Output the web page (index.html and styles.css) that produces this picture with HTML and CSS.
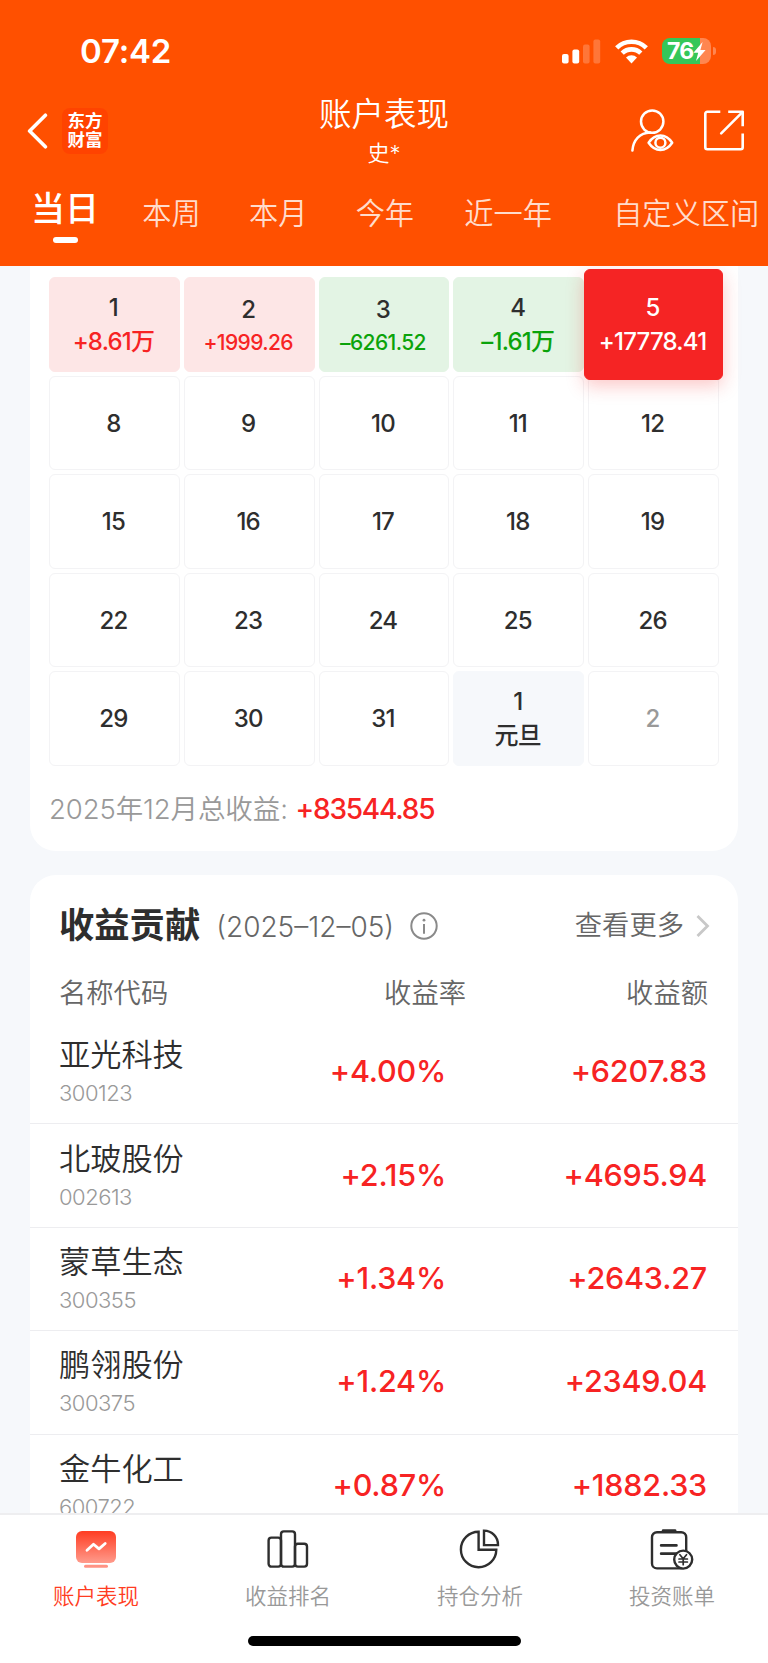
FILE: index.html
```
<!DOCTYPE html>
<html lang="zh-CN">
<head>
    <meta charset="UTF-8">
    <title>账户表现</title>
    <link rel="stylesheet" href="styles.css">
</head>
<body>
    <header class="header">
        <div class="status-bar">
            <span class="status-time">07:42</span>
            <div class="status-icons">
                <svg class="signal" width="39" height="25" viewBox="0 0 39 25" fill="#fff">
                    <rect x="0" y="15" width="6.6" height="9.6" rx="2"/>
                    <rect x="10.4" y="10.6" width="6.8" height="14" rx="2"/>
                    <rect x="21" y="5.4" width="6.6" height="19.2" rx="2" opacity=".22"/>
                    <rect x="31.4" y="0.4" width="6.8" height="24.2" rx="2" opacity=".22"/>
                </svg>
                <svg class="wifi" width="33" height="25" viewBox="0 0 33 25" fill="none" stroke="#fff" stroke-width="4.6">
                    <path d="M1.7 8.8a21 21 0 0 1 29.6 0"/>
                    <path d="M7.2 14.2a13.3 13.3 0 0 1 18.6 0"/>
                    <path d="M11 18.6a7.8 7.8 0 0 1 11 0L16.5 24.4z" fill="#fff" stroke="none"/>
                </svg>
                <div class="battery">
                    <span class="battery-level">76</span>
                    <svg class="battery-bolt" width="13" height="19" viewBox="0 0 13 19" fill="#fff"><path d="M9.6 0L.4 10.8h4.8L3 19l9.6-11H7.4z"/></svg>
                </div>
                <span class="battery-cap"></span>
            </div>
        </div>

        <div class="nav-bar">
            <div class="nav-left">
                <svg class="back-icon" width="22" height="36" viewBox="0 0 22 36" fill="none" stroke="#fff" stroke-width="3.6" stroke-linecap="round" stroke-linejoin="round"><path d="M19.4 2.2L3.6 18l15.8 15.8"/></svg>
                <div class="app-logo">东方<br>财富</div>
            </div>
            <div class="nav-title">
                <h1 class="title">账户表现</h1>
                <p class="subtitle">史*</p>
            </div>
            <div class="nav-right">
                <svg width="44" height="44" viewBox="0 0 44 44" fill="none" stroke="#fff" stroke-width="2.5" stroke-linecap="round">
                    <circle cx="22.2" cy="12.6" r="11.2"/>
                    <path d="M2.4 41.6C3.2 31 10 23.800 20 23.5"/>
                    <path d="M18.6 33.7c6.5-9.6 17.2-9.6 23.6 0-6.4 9.6-17.1 9.6-23.6 0z" stroke-linejoin="round"/>
                    <circle cx="30.4" cy="33.7" r="5"/>
                </svg>
                <svg width="42" height="42" viewBox="0 0 42 42" fill="none" stroke="#fff" stroke-width="2.6" stroke-linejoin="round">
                    <path d="M17.3 1.8H4.3a2 2 0 0 0-2 2v33.4a2 2 0 0 0 2 2h33.4a2 2 0 0 0 2-2V23.5"/>
                    <path d="M25.2 1.8h14.5v14.5"/>
                    <path d="M39.2 2.3L18.2 23.3" stroke-linecap="round"/>
                </svg>
            </div>
        </div>

        <nav class="period-tabs">
            <span class="period active">当日</span>
            <span class="period">本周</span>
            <span class="period">本月</span>
            <span class="period">今年</span>
            <span class="period period-year">近一年</span>
            <span class="period period-custom">自定义区间</span>
        </nav>
    </header>

    <main class="content">
        <section class="card calendar-card">
            <div class="calendar">
                <div class="day up"><span>1</span><span class="profit">+8.61万</span></div>
                <div class="day up small"><span>2</span><span class="profit">+1999.26</span></div>
                <div class="day down small"><span>3</span><span class="profit">–6261.52</span></div>
                <div class="day down"><span>4</span><span class="profit">–1.61万</span></div>
                <div class="day selected"><span>5</span><span class="profit">+17778.41</span></div>
                <div class="day">8</div>
                <div class="day">9</div>
                <div class="day">10</div>
                <div class="day">11</div>
                <div class="day">12</div>
                <div class="day">15</div>
                <div class="day">16</div>
                <div class="day">17</div>
                <div class="day">18</div>
                <div class="day">19</div>
                <div class="day">22</div>
                <div class="day">23</div>
                <div class="day">24</div>
                <div class="day">25</div>
                <div class="day">26</div>
                <div class="day">29</div>
                <div class="day">30</div>
                <div class="day">31</div>
                <div class="day holiday"><span>1</span><span class="profit">元旦</span></div>
                <div class="day muted">2</div>
            </div>
            <p class="month-total">2025年12月总收益: <span class="total-value">+83544.85</span></p>
        </section>

        <section class="card contribution-card">
            <div class="card-head">
                <h2 class="card-title">收益贡献</h2>
                <span class="card-date">(2025–12–05)</span>
                <svg class="info-icon" width="28" height="28" viewBox="0 0 28 28" fill="none" stroke="#8a8a8a" stroke-width="2">
                    <circle cx="14" cy="14" r="12.7"/>
                    <path d="M14 12v9.8"/>
                    <circle cx="14" cy="8.2" r="1.4" fill="#8a8a8a" stroke="none"/>
                </svg>
                <a class="more">查看更多
                    <svg width="14" height="24" viewBox="0 0 14 24" fill="none" stroke="#c8c8c8" stroke-width="2.8"><path d="M1.5 2l10 10-10 10"/></svg>
                </a>
            </div>
            <div class="list-head">
                <span>名称代码</span>
                <span class="col-rate">收益率</span>
                <span class="col-amount">收益额</span>
            </div>
            <div class="stock">
                <div class="stock-info"><p class="stock-name">亚光科技</p><p class="stock-code">300123</p></div>
                <span class="stock-rate">+4.00%</span>
                <span class="stock-amount">+6207.83</span>
            </div>
            <div class="stock">
                <div class="stock-info"><p class="stock-name">北玻股份</p><p class="stock-code">002613</p></div>
                <span class="stock-rate">+2.15%</span>
                <span class="stock-amount">+4695.94</span>
            </div>
            <div class="stock">
                <div class="stock-info"><p class="stock-name">蒙草生态</p><p class="stock-code">300355</p></div>
                <span class="stock-rate">+1.34%</span>
                <span class="stock-amount">+2643.27</span>
            </div>
            <div class="stock">
                <div class="stock-info"><p class="stock-name">鹏翎股份</p><p class="stock-code">300375</p></div>
                <span class="stock-rate">+1.24%</span>
                <span class="stock-amount">+2349.04</span>
            </div>
            <div class="stock">
                <div class="stock-info"><p class="stock-name">金牛化工</p><p class="stock-code">600722</p></div>
                <span class="stock-rate">+0.87%</span>
                <span class="stock-amount">+1882.33</span>
            </div>
        </section>
    </main>

    <footer class="tab-bar">
        <div class="tabs">
            <div class="tab active">
                <svg width="44" height="44" viewBox="0 0 44 44">
                    <defs>
                        <linearGradient id="screen" x1="0" y1="0" x2="0" y2="1">
                            <stop offset="0" stop-color="#ff3c22"/>
                            <stop offset="1" stop-color="#ff9b8c"/>
                        </linearGradient>
                    </defs>
                    <rect x="2" y="3" width="40" height="32" rx="6" fill="url(#screen)"/>
                    <rect x="10" y="36.8" width="24" height="3" rx="1.5" fill="#ff9384"/>
                    <path d="M13 22.3l6.5-6 5.5 4.6 6.2-5.4" fill="none" stroke="#fff" stroke-width="2.8" stroke-linecap="round" stroke-linejoin="round"/>
                </svg>
                <span>账户表现</span>
            </div>
            <div class="tab">
                <svg width="44" height="44" viewBox="0 0 44 44" fill="none" stroke="#2e2e2e" stroke-width="2.4">
                    <rect x="2.6" y="9.6" width="12.4" height="29" rx="2.8"/>
                    <rect x="15" y="3.4" width="14" height="35.2" rx="2.8"/>
                    <rect x="29" y="15.8" width="12" height="22.8" rx="2.8"/>
                </svg>
                <span>收益排名</span>
            </div>
            <div class="tab">
                <svg width="44" height="44" viewBox="0 0 44 44" fill="none" stroke="#2e2e2e" stroke-width="2.4">
                    <path d="M20.600 3.800A17.700 17.700 0 1 0 38.300 21.700H20.600z"/>
                    <path d="M26 2.600a14 14 0 0 1 14 14.500H26z"/>
                </svg>
                <span>持仓分析</span>
            </div>
            <div class="tab">
                <svg width="44" height="44" viewBox="0 0 44 44" fill="none" stroke="#2e2e2e" stroke-width="2.4" stroke-linecap="round" stroke-linejoin="round">
                    <rect x="2" y="4.2" width="34.2" height="36.2" rx="5"/>
                    <path d="M13.2 2.6h11.800" stroke-width="2.8"/>
                    <path d="M11.200 17.400h15.200M11.200 25.700h15" stroke-width="2.8"/>
                    <circle cx="33.200" cy="31.600" r="9" fill="#fff"/>
                    <path d="M29.900 26.700l3.300 4 3.300-4M33.200 30.700v6M29 31h8.400M29 34h8.400" stroke-width="1.700"/>
                </svg>
                <span>投资账单</span>
            </div>
        </div>
        <div class="home-indicator"></div>
    </footer>
</body>
</html>
```

FILE: styles.css
```
:root {
    --brand-color: #ff5000;
    --up-color: #f72323;
    --down-color: #0ba30b;
    --page-background: #f6f8fb;
    --text-color: #2e2e2e;
    --text-secondary: #666666;
    --text-muted: #999999;
    --card-background: #ffffff;
}

* {
    margin: 0;
    padding: 0;
    box-sizing: border-box;
}

body {
    width: 768px;
    height: 1663px;
    display: flex;
    flex-direction: column;
    overflow: hidden;
    font-family: Inter, "Noto Sans CJK SC", sans-serif;
    font-weight: 350;
    background-color: var(--page-background);
    color: var(--text-color);
}

svg {
    display: block;
    flex-shrink: 0;
}

/* Header */
.header {
    flex: none;
    height: 266px;
    background-color: var(--brand-color);
    color: #fff;
}

.status-bar {
    display: flex;
    justify-content: space-between;
    height: 96px;
    padding: 31px 52px 0 80px;
}

.status-time {
    font-size: 33px;
    font-weight: 600;
    letter-spacing: -0.2px;
    line-height: 40px;
}

.status-icons {
    display: flex;
    align-items: center;
    height: 40px;
}

.wifi {
    margin: 0 14px;
}

.battery {
    display: flex;
    align-items: center;
    width: 49px;
    height: 26px;
    padding-left: 5px;
    border-radius: 8px;
    background: linear-gradient(90deg, #34c759 77%, #ff8650 77%);
}

.battery-level {
    font-size: 23px;
    font-weight: 700;
    letter-spacing: -0.8px;
    line-height: 26px;
}

.battery-cap {
    width: 3px;
    height: 8px;
    margin-left: 2px;
    border-radius: 0 3px 3px 0;
    background-color: #ff8650;
}

.nav-bar {
    display: grid;
    grid-template-columns: 1fr 160px 1fr;
    height: 80px;
}

.nav-left {
    display: flex;
    align-items: center;
    height: 69px;
    padding-left: 26px;
}

.app-logo {
    width: 46px;
    height: 46px;
    margin-left: 14px;
    padding-top: 3px;
    border-radius: 8px;
    background-color: #ff4300;
    font-size: 17.5px;
    font-weight: 700;
    line-height: 19px;
    text-align: center;
}

.nav-title {
    text-align: center;
}

.title {
    font-size: 32.5px;
    font-weight: 350;
    line-height: 38px;
    white-space: nowrap;
}

.subtitle {
    font-size: 22px;
    line-height: 38px;
}

.nav-right {
    display: flex;
    justify-content: flex-end;
    align-items: center;
    gap: 29px;
    height: 69px;
    padding-right: 23px;
}

.period-tabs {
    display: flex;
    gap: 48.3px;
    height: 90px;
    padding: 12px 0 0 31px;
    white-space: nowrap;
}

.period {
    font-size: 29.2px;
    line-height: 52px;
    color: #ffdccc;
}

.period.active {
    display: flex;
    flex-direction: column;
    align-items: center;
    margin-right: -5px;
    font-size: 34px;
    font-weight: 500;
    line-height: 42px;
    color: #fff;
}

.period.active::after {
    content: "";
    width: 25px;
    height: 6px;
    margin-top: 7px;
    border-radius: 3px;
    background-color: #fff;
}

.period-year {
    margin-left: 2px;
}

.period-custom {
    margin-left: 13px;
}

/* Scrolling content */
.content {
    flex: 1;
    min-height: 0;
    overflow: hidden;
    padding: 0 30px;
}

.card {
    background-color: var(--card-background);
}

.calendar-card {
    height: 585px;
    padding: 11px 19px 0;
    border-radius: 0 0 26px 26px;
}

.calendar {
    display: grid;
    grid-template-columns: repeat(5, 1fr);
    grid-auto-rows: 94.5px;
    gap: 4px;
}

.day {
    display: flex;
    flex-direction: column;
    align-items: center;
    justify-content: center;
    padding: 2px 2px 0 0;
    border: 1px solid #f3f3f5;
    border-radius: 6px;
    font-size: 24px;
    font-weight: 500;
    letter-spacing: -0.8px;
    line-height: 34px;
}

.up {
    border-color: #fde6e6;
    background-color: #fde6e6;
}

.down {
    border-color: #e3f4e4;
    background-color: #e3f4e4;
}

.up .profit {
    color: var(--up-color);
}

.down .profit {
    color: var(--down-color);
}

.small .profit {
    font-size: 21px;
    line-height: 31px;
    letter-spacing: -0.6px;
}

.selected {
    z-index: 1;
    margin: -8px -4px;
    border-color: #f52424;
    background-color: #f52424;
    color: #fff;
    box-shadow: 0 6px 18px rgba(245, 36, 36, 0.25);
}

.holiday {
    border-color: var(--page-background);
    background-color: var(--page-background);
}

.muted {
    color: var(--text-muted);
}

.month-total {
    margin-top: 21px;
    font-size: 27.5px;
    letter-spacing: -0.1px;
    line-height: 44px;
    color: var(--text-muted);
}

.total-value {
    font-size: 28px;
    font-weight: 500;
    letter-spacing: -1.2px;
    color: var(--up-color);
}

.contribution-card {
    margin-top: 24px;
    padding-top: 26px;
    border-radius: 26px 26px 0 0;
}

.card-head {
    display: flex;
    align-items: center;
    height: 50px;
    padding: 0 28px 0 29px;
}

.card-title {
    font-size: 35.3px;
    font-weight: 700;
    line-height: 50px;
}

.card-date {
    margin-left: 16px;
    padding-top: 1px;
    font-size: 28px;
    color: var(--text-secondary);
}

.info-icon {
    margin-left: 16px;
}

.more {
    display: flex;
    align-items: center;
    gap: 12px;
    margin-left: auto;
    font-size: 27.3px;
    line-height: 38px;
    color: var(--text-secondary);
}

.list-head {
    display: grid;
    grid-template-columns: 1fr 240px 242px;
    height: 70px;
    padding: 22px 30px 0 29px;
    font-size: 27.3px;
    line-height: 42px;
    color: var(--text-secondary);
}

.col-rate,
.col-amount {
    text-align: right;
}

.stock {
    display: grid;
    grid-template-columns: 1fr 220px 261px;
    align-items: center;
    height: 103.4px;
    padding: 0 31px 0 29px;
    border-bottom: 1px solid #ededf0;
}

.stock-name {
    font-size: 31.2px;
    line-height: 40px;
}

.stock-code {
    padding-top: 2px;
    font-size: 22px;
    letter-spacing: -0.5px;
    line-height: 32px;
    color: var(--text-muted);
}

.stock-rate,
.stock-amount {
    padding-bottom: 3px;
    font-size: 30.5px;
    font-weight: 500;
    letter-spacing: -0.2px;
    text-align: right;
    color: var(--up-color);
}

/* Bottom tab bar */
.tab-bar {
    flex: none;
    height: 150px;
    border-top: 2px solid #eeeef0;
    background-color: #fff;
}

.tabs {
    display: grid;
    grid-template-columns: repeat(4, 1fr);
    height: 121px;
    padding-top: 13px;
}

.tab {
    display: flex;
    flex-direction: column;
    align-items: center;
    font-size: 21.5px;
    line-height: 30px;
    color: var(--text-muted);
}

.tab span {
    margin-top: 9px;
}

.tab.active {
    color: #ff3c22;
}

.home-indicator {
    width: 273px;
    height: 10px;
    margin: 0 auto;
    border-radius: 5px;
    background-color: #000;
}
```
